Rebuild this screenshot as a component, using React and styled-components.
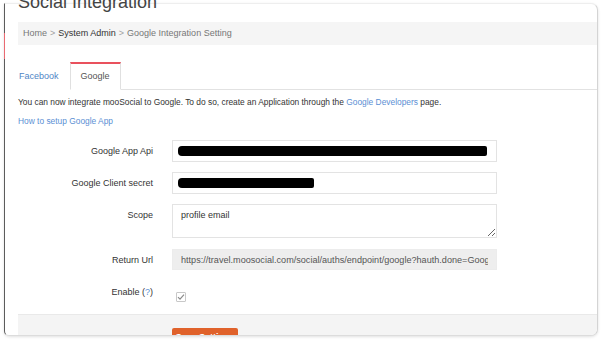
import React from "react";
import styled, { createGlobalStyle } from "styled-components";

const Global = createGlobalStyle`
  html, body { margin: 0; padding: 0; background: #fff; }
  body { font-family: "Liberation Sans", Arial, sans-serif; font-size: 9px; color: #333; overflow: hidden; }
  * { box-sizing: border-box; }
`;

const Page = styled.div`
  padding: 3px 4px 0 4px;
  height: 341px;
`;

const Card = styled.div`
  position: relative;
  background: #fff;
  border-top: 1px solid #eeeeee;
  border-left: 1px solid #5c5c5c;
  border-right: 1px solid #d4d4d4;
  border-bottom: 1px solid #dcdcdc;
  border-radius: 0 7px 7px 5px;
  box-shadow: 0 1px 3px rgba(0, 0, 0, 0.12);
  &::before {
    content: "";
    position: absolute;
    left: -1px;
    top: 29px;
    width: 1px;
    height: 26px;
    background: #ea6a72;
  }
`;

const Header = styled.div`
  padding-left: 13px;
`;

const Title = styled.h1`
  margin: -11px 0 0 0;
  height: 18px;
  font-size: 18px;
  line-height: 18px;
  font-weight: normal;
  color: #444;
`;

const Breadcrumb = styled.div`
  margin-top: 11px;
  height: 23px;
  line-height: 23px;
  padding-left: 5px;
  background: #f5f5f5;
  color: #777;
`;

const Crumb = styled.span`
  color: ${(p) => (p.$strong ? "#333" : "#777")};
`;

const Sep = styled.span`
  color: #a0a0a0;
  padding: 0 3px;
`;

const TabBar = styled.div`
  margin: 17px 0 0 3px;
  display: flex;
  height: 28px;
  border-bottom: 1px solid #e2e2e2;
`;

const Tab = styled.div`
  height: 28px;
  margin-bottom: -1px;
  padding: 0 10px;
  line-height: ${(p) => (p.$active ? "25px" : "27px")};
  color: ${(p) => (p.$active ? "#555" : "#4f86c6")};
  background: #fff;
  border: 1px solid ${(p) => (p.$active ? "#e0e0e0" : "transparent")};
  border-top: ${(p) => (p.$active ? "2px solid #e9515d" : "1px solid transparent")};
  border-bottom: 1px solid ${(p) => (p.$active ? "#fff" : "transparent")};
`;

const Body = styled.div`
  padding-left: 13px;
`;

const Para = styled.p`
  margin: ${(p) => p.$mt || "0"} 0 0 0;
  font-size: 8.4px;
  line-height: 13px;
`;

const Link = styled.a`
  color: #5b8fd4;
  text-decoration: none;
`;

const Form = styled.div`
  margin-top: 12px;
  display: grid;
  grid-template-columns: 135px 325px;
  column-gap: 19px;
  row-gap: 10px;
`;

const Label = styled.div`
  text-align: right;
  line-height: 22px;
  color: #333;
  margin-top: ${(p) => p.$mt || "0"};
`;

const FieldBox = styled.div`
  height: 22px;
  border: 1px solid #e3e3e3;
  display: flex;
  align-items: center;
  padding-left: 5px;
`;

const Redacted = styled.span`
  display: block;
  height: 10px;
  background: #000;
  border-radius: 4px 2px 2px 4px;
`;

const TextArea = styled.textarea`
  height: 34px;
  border: 1px solid #e3e3e3;
  padding: 5px 8px;
  font-family: "Liberation Sans", Arial, sans-serif;
  font-size: 9px;
  line-height: 11px;
  color: #333;
  resize: vertical;
  outline: none;
  margin: 0;
`;

const TextInput = styled.input`
  height: 21px;
  border: 1px solid #ececec;
  background: #eeeeee;
  padding: 0 8px 0 8px;
  font-family: "Liberation Sans", Arial, sans-serif;
  font-size: 9.1px;
  color: #555;
  outline: none;
  margin: ${(p) => p.$mt || "0"} 0 0 0;
`;

const Check = styled.span`
  display: flex;
  align-items: center;
  justify-content: center;
  width: 10px;
  height: 10px;
  margin: 11px 0 0 4px;
  border: 1px solid #c8c8c8;
  border-radius: 1px;
  background: #fff;
`;

const Footer = styled.div`
  margin: 11px 0 0 13px;
  height: 21px;
  overflow: hidden;
  background: #f4f4f4;
  border-top: 1px solid #e9e9e9;
  border-bottom-right-radius: 6px;
  padding: 13px 0 0 154px;
`;

const SaveButton = styled.button`
  width: 66px;
  height: 18px;
  border: none;
  border-radius: 2px;
  background: #e0622b;
  color: #fff;
  font-family: "Liberation Sans", Arial, sans-serif;
  font-size: 9px;
  font-weight: bold;
  padding: 0;
  display: block;
`;

export default function App() {
  return (
    <>
      <Global />
      <Page>
        <Card>
          <Header>
            <Title>Social Integration</Title>
            <Breadcrumb>
              <Crumb>Home</Crumb>
              <Sep>&gt;</Sep>
              <Crumb $strong>System Admin</Crumb>
              <Sep>&gt;</Sep>
              <Crumb>Google Integration Setting</Crumb>
            </Breadcrumb>
          </Header>
          <TabBar>
            <Tab>Facebook</Tab>
            <Tab $active>Google</Tab>
          </TabBar>
          <Body>
            <Para $mt="6px">
              You can now integrate mooSocial to Google. To do so, create an Application through the{" "}
              <Link href="#">Google Developers</Link> page.
            </Para>
            <Para $mt="6px">
              <Link href="#">How to setup Google App</Link>
            </Para>
            <Form>
              <Label>Google App Api</Label>
              <FieldBox>
                <Redacted style={{ width: 309 }} />
              </FieldBox>
              <Label>Google Client secret</Label>
              <FieldBox>
                <Redacted style={{ width: 136 }} />
              </FieldBox>
              <Label>Scope</Label>
              <TextArea readOnly value="profile email" />
              <Label $mt="1px">Return Url</Label>
              <TextInput
                $mt="1px"
                readOnly
                value="https://travel.moosocial.com/social/auths/endpoint/google?hauth.done=Google"
              />
              <Label>
                Enable (<Link href="#">?</Link>)
              </Label>
              <div>
                <Check>
                  <svg width="8" height="8" viewBox="0 0 8 8">
                    <path d="M1 4.2 L3 6.2 L7 1.6" fill="none" stroke="#8a8a8a" strokeWidth="1.2" />
                  </svg>
                </Check>
              </div>
            </Form>
          </Body>
          <Footer>
            <SaveButton>Save Settings</SaveButton>
          </Footer>
        </Card>
      </Page>
    </>
  );
}
